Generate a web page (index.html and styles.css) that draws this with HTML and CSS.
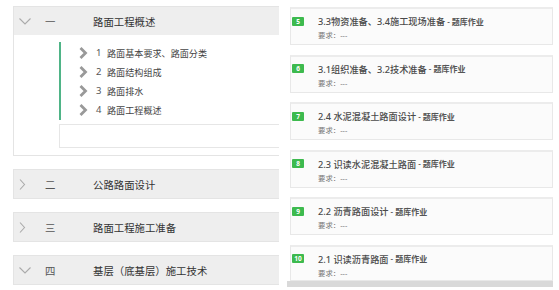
FILE: index.html
```html
<!DOCTYPE html>
<html lang="zh-CN">
<head>
    <meta charset="UTF-8">
    <title>课程章节</title>
    <link rel="stylesheet" href="styles.css">
</head>
<body>
    <div class="page">
        <div class="chapters">
            <div class="chapter open">
                <div class="chapter-head">
                    <span class="arrow"><svg width="12" height="7" viewBox="0 0 12 7"><polyline points="0.5,0.5 6,6 11.5,0.5" fill="none" stroke="#aaa" stroke-width="1.1"/></svg></span>
                    <span class="num">一</span>
                    <span class="name">路面工程概述</span>
                </div>
                <div class="chapter-body">
                    <ul class="sections">
                        <li><svg class="caret" width="9" height="12" viewBox="0 0 9 12"><polyline points="1.5,1 6.5,6 1.5,11" fill="none" stroke="#999" stroke-width="2.8"/></svg><span class="idx">1</span>路面基本要求、路面分类</li>
                        <li><svg class="caret" width="9" height="12" viewBox="0 0 9 12"><polyline points="1.5,1 6.5,6 1.5,11" fill="none" stroke="#999" stroke-width="2.8"/></svg><span class="idx">2</span>路面结构组成</li>
                        <li><svg class="caret" width="9" height="12" viewBox="0 0 9 12"><polyline points="1.5,1 6.5,6 1.5,11" fill="none" stroke="#999" stroke-width="2.8"/></svg><span class="idx">3</span>路面排水</li>
                        <li><svg class="caret" width="9" height="12" viewBox="0 0 9 12"><polyline points="1.5,1 6.5,6 1.5,11" fill="none" stroke="#999" stroke-width="2.8"/></svg><span class="idx">4</span>路面工程概述</li>
                    </ul>
                    <div class="blank"></div>
                </div>
            </div>
            <div class="chapter">
                <div class="chapter-head">
                    <span class="arrow"><svg width="7" height="11" viewBox="0 0 7 11"><polyline points="1,0.5 5.5,5.5 1,10.5" fill="none" stroke="#aaa" stroke-width="1.1"/></svg></span>
                    <span class="num">二</span>
                    <span class="name">公路路面设计</span>
                </div>
            </div>
            <div class="chapter">
                <div class="chapter-head">
                    <span class="arrow"><svg width="7" height="11" viewBox="0 0 7 11"><polyline points="1,0.5 5.5,5.5 1,10.5" fill="none" stroke="#aaa" stroke-width="1.1"/></svg></span>
                    <span class="num">三</span>
                    <span class="name">路面工程施工准备</span>
                </div>
            </div>
            <div class="chapter">
                <div class="chapter-head">
                    <span class="arrow"><svg width="12" height="7" viewBox="0 0 12 7"><polyline points="0.5,0.5 6,6 11.5,0.5" fill="none" stroke="#aaa" stroke-width="1.1"/></svg></span>
                    <span class="num">四</span>
                    <span class="name">基层（底基层）施工技术</span>
                </div>
            </div>
        </div>

        <div class="tasks">
            <div class="task">
                <div class="task-title"><span class="badge">5</span>3.3物资准备、3.4施工现场准备<span class="kind"> - <b>题库作业</b></span></div>
                <div class="task-req">要求：---</div>
            </div>
            <div class="task">
                <div class="task-title"><span class="badge">6</span>3.1组织准备、3.2技术准备<span class="kind"> - <b>题库作业</b></span></div>
                <div class="task-req">要求：---</div>
            </div>
            <div class="task">
                <div class="task-title"><span class="badge">7</span>2.4 水泥混凝土路面设计<span class="kind"> - <b>题库作业</b></span></div>
                <div class="task-req">要求：---</div>
            </div>
            <div class="task">
                <div class="task-title"><span class="badge">8</span>2.3 识读水泥混凝土路面<span class="kind"> - <b>题库作业</b></span></div>
                <div class="task-req">要求：---</div>
            </div>
            <div class="task">
                <div class="task-title"><span class="badge">9</span>2.2 沥青路面设计<span class="kind"> - <b>题库作业</b></span></div>
                <div class="task-req">要求：---</div>
            </div>
            <div class="task cut">
                <div class="task-title"><span class="badge">10</span>2.1 识读沥青路面<span class="kind"> - <b>题库作业</b></span></div>
                <div class="task-req">要求：---</div>
            </div>
            <div class="scroll-bar"></div>
        </div>
    </div>
</body>
</html>
```

FILE: styles.css
```css
body {
    margin: 0;
    height: 290px;
    overflow: hidden;
    background-color: #fff;
    font-family: 'Noto Sans', 'Noto Sans CJK SC', sans-serif;
    color: #333;
}

.page {
    display: flex;
    align-items: flex-start;
    gap: 11px;
    padding: 6px 0 0 13px;
}

/* left column: chapter accordion */
.chapters {
    width: 266px;
    display: flex;
    flex-direction: column;
    gap: 13px;
    flex-shrink: 0;
}

.chapter {
    border: 1px solid #e4e4e4;
    border-right: none;
    background: #fff;
}

.chapter-head {
    height: 28px;
    display: flex;
    align-items: center;
    background-color: #eeeeee;
    font-size: 10.4px;
}

.arrow {
    width: 31px;
    padding-left: 5px;
    box-sizing: border-box;
    display: flex;
    align-items: center;
}

.num {
    width: 48px;
    color: #555;
}

.name {
    color: #333;
}

.chapter-body {
    padding: 7px 0 7px 45px;
}

.sections {
    list-style: none;
    margin: 0;
    padding: 1px 0 1px 18px;
    border-left: 2px solid #4fb487;
}

.sections li {
    height: 19px;
    display: flex;
    align-items: center;
    font-size: 9.1px;
    color: #444;
}

.caret {
    margin-right: 8px;
}

.idx {
    width: 11px;
    font-size: 9.5px;
    color: #555;
}

.blank {
    margin-top: 4px;
    height: 24px;
    box-sizing: border-box;
    border: 1px solid #e6e6e6;
    border-right: none;
}

/* right column: homework list */
.tasks {
    width: 263px;
    margin-top: 1px;
    display: flex;
    flex-direction: column;
}

.task {
    height: 38px;
    box-sizing: border-box;
    border: 1px solid #e8e8e8;
    border-top: 2px solid #ececec;
    background-color: #fbfbfb;
    padding-top: 6px;
}

.task + .task {
    margin-top: 9.6px;
}

.task.cut {
    height: 36px;
}

.task-title {
    height: 12px;
    display: flex;
    align-items: center;
    font-size: 9.2px;
    font-weight: 500;
    color: #4a4a4a;
    white-space: nowrap;
}

.badge {
    min-width: 12px;
    height: 9px;
    padding: 0 1px;
    box-sizing: border-box;
    margin: 0 14px 0 1px;
    background-color: #3dba4e;
    border-radius: 1px;
    color: #fff;
    font-size: 6.5px;
    font-weight: 700;
    line-height: 9px;
    text-align: center;
}

.kind {
    font-size: 8px;
    color: #555;
    white-space: pre;
}

.kind b {
    font-weight: 700;
}

.task-req {
    margin-top: 3px;
    padding-left: 27px;
    font-size: 7.4px;
    line-height: 10px;
    color: #777;
}

.scroll-bar {
    height: 6px;
    width: 266px;
    margin-left: -3px;
    background-color: #d9d9d9;
}
```
